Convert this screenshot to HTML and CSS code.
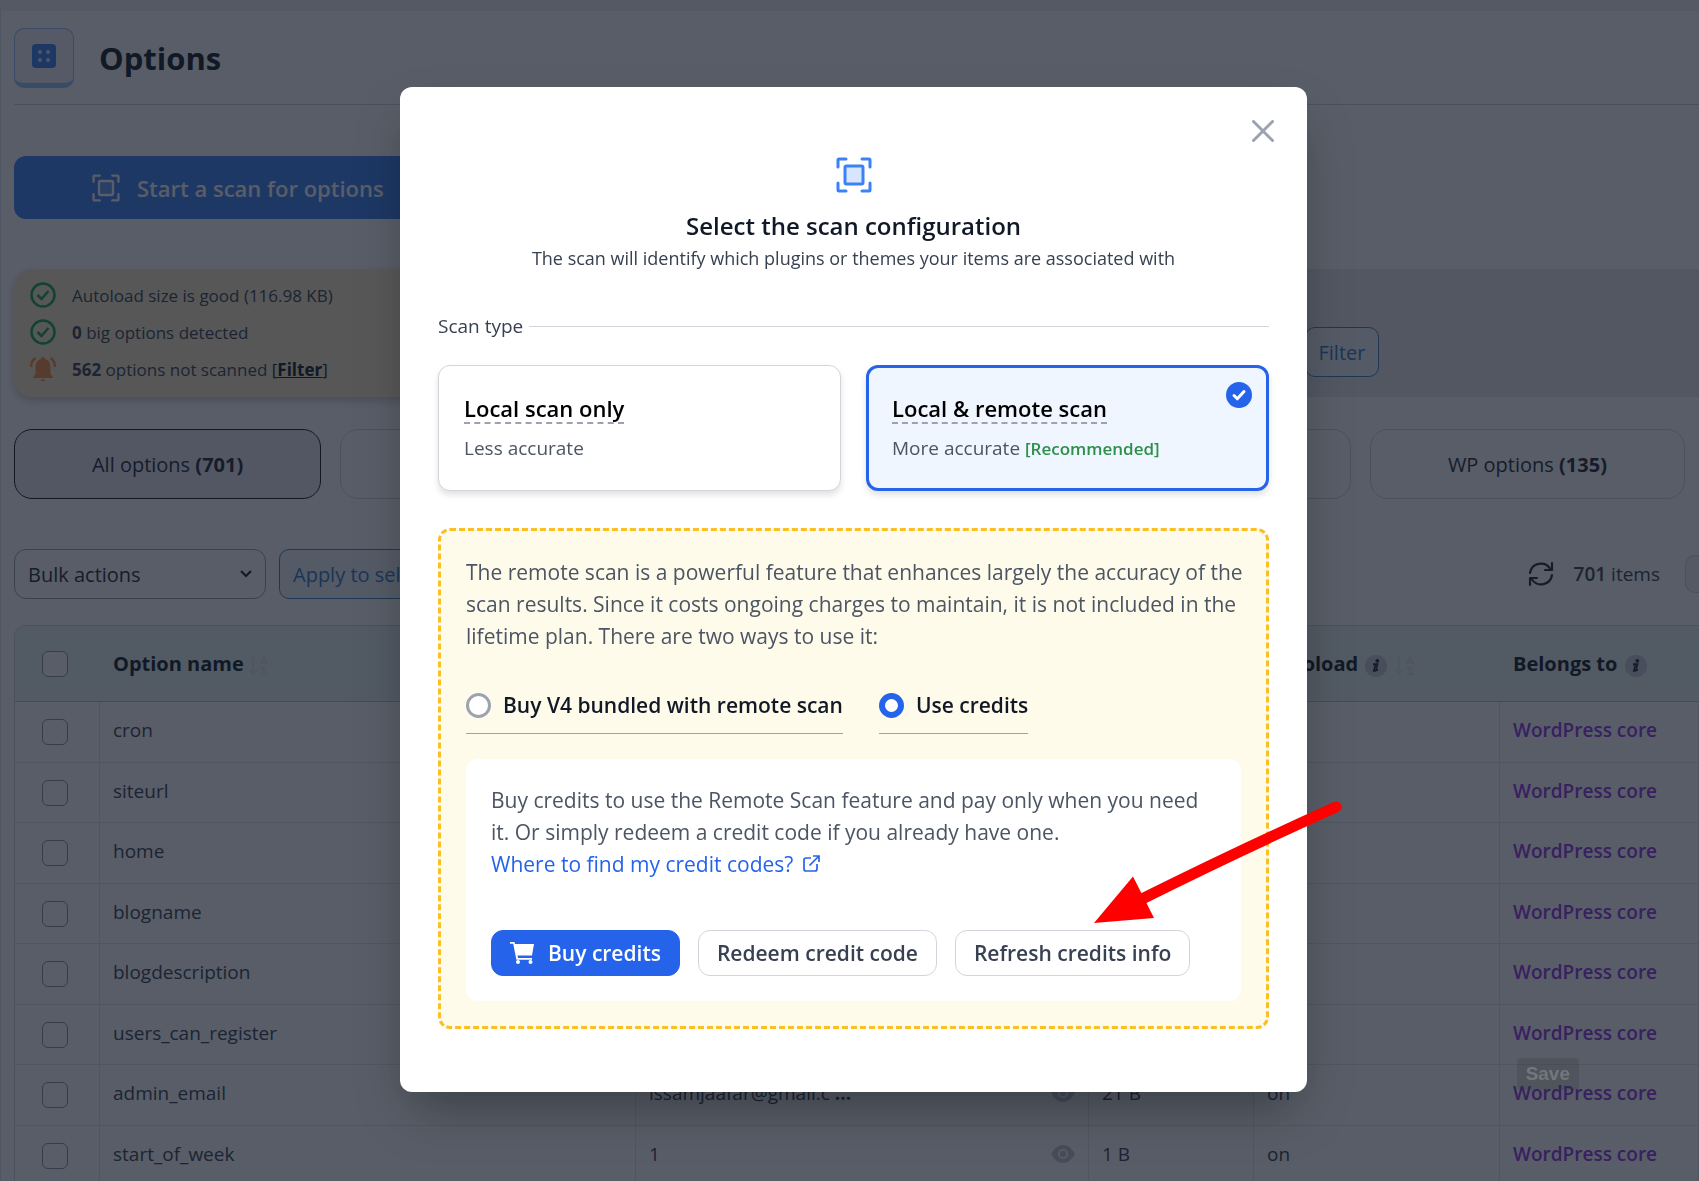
FILE: index.html
```html
<!DOCTYPE html>
<html lang="en">
<head>
<meta charset="utf-8">
<title>Options</title>
<link rel="stylesheet" href="styles.css">
</head>
<body>
<svg class="sprite" aria-hidden="true">
  <symbol id="scan" viewBox="0 0 36 36"><path d="M2 10V3Q2 2 3 2h7M26 2h7q1 0 1 1v7M34 26v7q0 1-1 1h-7M10 34H3q-1 0-1-1v-7" fill="none" stroke="currentColor" stroke-width="3" stroke-linecap="round"/><rect x="9" y="9" width="18" height="18" rx="1.500" fill="currentColor" fill-opacity=".2" stroke="currentColor" stroke-width="3"/></symbol>
  <symbol id="sort" viewBox="0 0 20 20"><path d="M4 1v16M1 14l3 4 3-4M12 18h6l-5.500-6H18M12 8l3-7 3 7M13 6h4" fill="none" stroke="currentColor" stroke-width="1.600"/></symbol>
  <symbol id="check" viewBox="0 0 26 26"><circle cx="13" cy="13" r="11.500" fill="none" stroke="currentColor" stroke-width="2.500"/><path d="M7.500 13l4 4 7-8" fill="none" stroke="currentColor" stroke-width="2.500"/></symbol>
  <symbol id="info" viewBox="0 0 22 22"><circle cx="11" cy="11" r="11" fill="#c9cbd8"/><circle cx="12.300" cy="5.800" r="1.900" fill="#1f2937"/><path d="M8 9.200h4.600l-1.700 6.200 2.100-.5M8.300 9.600h2.200l-1.700 6.300h2.600" fill="none" stroke="#1f2937" stroke-width="1.700"/></symbol>
  <symbol id="eye" viewBox="0 0 24 20"><path d="M0 10Q5 1 12 1t12 9q-5 9-12 9T0 10z" fill="currentColor"/><circle cx="12" cy="10" r="5" fill="#fff"/><circle cx="12" cy="10" r="3.200" fill="currentColor"/></symbol>
</svg>

<main class="page">
  <header class="page-head">
    <div class="badge">
      <svg width="24" height="24" viewBox="0 0 24 24"><rect width="24" height="24" rx="4" fill="#3b82f6"/><g fill="#dbeafe"><circle cx="8" cy="8" r="2"/><circle cx="16" cy="8" r="2"/><circle cx="8" cy="16" r="2"/><circle cx="16" cy="16" r="2"/></g></svg>
    </div>
    <h1>Options</h1>
  </header>

  <button class="start" type="button"><svg width="28" height="28"><use href="#scan"/></svg>Start a scan for options</button>

  <section class="summary">
    <ul class="status">
      <li><svg class="ok" width="26" height="26"><use href="#check"/></svg><span>Autoload size is good (116.98 KB)</span></li>
      <li><svg class="ok" width="26" height="26"><use href="#check"/></svg><span><b>0</b> big options detected</span></li>
      <li><svg width="26" height="26" viewBox="0 0 26 26"><path d="M13 1q2 0 2 2 5.500 1.500 5.500 8v7l3 4h-21l3-4v-7Q5.500 4.500 11 3q0-2 2-2zM10.500 23.500h5q-1 2-2.500 2t-2.500-2z" fill="#fb923c"/><path d="M1 11q0-6 4.500-9M25 11q0-6-4.500-9" fill="none" stroke="#fb923c" stroke-width="2.500"/></svg><span><b>562</b> options not scanned <a href="#filter">[<b>Filter</b>]</a></span></li>
    </ul>
    <div class="filters"><button class="outline" type="button">Filter</button></div>
  </section>

  <nav class="tabs">
    <button class="tab active" type="button">All options <b>(701)</b></button>
    <button class="tab" type="button"></button>
    <button class="tab" type="button"></button>
    <button class="tab" type="button"></button>
    <button class="tab" type="button">WP options <b>(135)</b></button>
  </nav>

  <div class="toolbar">
    <select class="bulk" aria-label="Bulk actions"><option>Bulk actions</option></select>
    <button class="outline" type="button">Apply to selected</button>
    <div class="count">
      <svg width="26" height="26" viewBox="0 0 26 26" fill="none" stroke="#1f2937" stroke-width="2.200" stroke-linecap="round" stroke-linejoin="round"><path d="M2 12A11 11 0 0 1 22 7.500M24 2v7h-7M24 14A11 11 0 0 1 4 18.500M2 24v-7h7"/></svg>
      <span><b>701</b> items</span>
    </div>
    <button class="pager" type="button" aria-label="First page"></button>
  </div>

  <div class="table-box">
    <table>
      <colgroup><col class="c-check"><col class="c-name"><col><col class="c-size"><col class="c-auto"><col class="c-owner"></colgroup>
      <thead>
        <tr><th><input type="checkbox" aria-label="Select all"></th><th>Option name <svg class="sort" width="20" height="20"><use href="#sort"/></svg></th><th></th><th></th><th>Autoload <svg class="info" width="22" height="22"><use href="#info"/></svg> <svg class="sort" width="20" height="20"><use href="#sort"/></svg></th><th>Belongs to <svg class="info" width="22" height="22"><use href="#info"/></svg></th></tr>
      </thead>
      <tbody>
        <tr><td><input type="checkbox" aria-label="cron"></td><td>cron</td><td></td><td></td><td></td><td class="owner">WordPress core</td></tr>
        <tr><td><input type="checkbox" aria-label="siteurl"></td><td>siteurl</td><td></td><td></td><td></td><td class="owner">WordPress core</td></tr>
        <tr><td><input type="checkbox" aria-label="home"></td><td>home</td><td></td><td></td><td></td><td class="owner">WordPress core</td></tr>
        <tr><td><input type="checkbox" aria-label="blogname"></td><td>blogname</td><td></td><td></td><td></td><td class="owner">WordPress core</td></tr>
        <tr><td><input type="checkbox" aria-label="blogdescription"></td><td>blogdescription</td><td></td><td></td><td></td><td class="owner">WordPress core</td></tr>
        <tr><td><input type="checkbox" aria-label="users_can_register"></td><td>users_can_register</td><td></td><td></td><td></td><td class="owner">WordPress core</td></tr>
        <tr><td><input type="checkbox" aria-label="admin_email"></td><td>admin_email</td><td><div class="value"><span>issamjaafar@gmail.c <b>...</b></span><svg class="eye" width="24" height="20"><use href="#eye"/></svg></div></td><td>21 B</td><td>on</td><td class="owner">WordPress core</td></tr>
        <tr><td><input type="checkbox" aria-label="start_of_week"></td><td>start_of_week</td><td><div class="value"><span>1</span><svg class="eye" width="24" height="20"><use href="#eye"/></svg></div></td><td>1 B</td><td>on</td><td class="owner">WordPress core</td></tr>
      </tbody>
    </table>
  </div>
</main>

<div class="overlay">
  <button class="save" type="button">Save</button>
  <div class="modal" role="dialog" aria-labelledby="dlg-title">
    <button class="close" type="button" aria-label="Close"><svg width="22" height="22" viewBox="0 0 22 22"><path d="M1.500 1.500l19 19M20.500 1.500l-19 19" stroke="#9ca3af" stroke-width="3" stroke-linecap="round"/></svg></button>
    <svg class="modal-icon" width="36" height="36"><use href="#scan"/></svg>
    <h2 id="dlg-title">Select the scan configuration</h2>
    <p class="lead">The scan will identify which plugins or themes your items are associated with</p>

    <div class="divider">Scan type</div>

    <div class="cards">
      <button class="card" type="button">
        <span class="card-title">Local scan only</span>
        <span class="card-sub">Less accurate</span>
      </button>
      <button class="card selected" type="button">
        <span class="card-title">Local &amp; remote scan</span>
        <span class="card-sub">More accurate <b>[Recommended]</b></span>
        <svg class="tick" width="26" height="26" viewBox="0 0 26 26"><circle cx="13" cy="13" r="13" fill="#2563eb"/><path d="M8 13.500l3.300 3.300L18 9.500" fill="none" stroke="#fff" stroke-width="3" stroke-linecap="round" stroke-linejoin="round"/></svg>
      </button>
    </div>

    <section class="remote">
      <p class="intro">The remote scan is a powerful feature that enhances largely the accuracy of the scan results. Since it costs ongoing charges to maintain, it is not included in the lifetime plan. There are two ways to use it:</p>
      <div class="choices">
        <label><input type="radio" name="way">Buy V4 bundled with remote scan</label>
        <label><input type="radio" name="way" checked>Use credits</label>
      </div>
      <div class="credits">
        <p>Buy credits to use the Remote Scan feature and pay only when you need it. Or simply redeem a credit code if you already have one.<br><a href="#codes">Where to find my credit codes? <svg width="17" height="17" viewBox="0 0 17 17" fill="none" stroke="currentColor" stroke-width="1.700"><path d="M8 3H3Q1 3 1 5v9q0 2 2 2h9q2 0 2-2V9M10 1h6v6M16 1L6.500 10.500"/></svg></a></p>
        <div class="actions">
          <button class="btn primary" type="button"><svg width="24" height="22" viewBox="0 0 24 22" fill="#fff"><path d="M0 0h4.500l.5 2h19l-2 11.500H7.500L8 16h14v1.700H6.400L3.200 1.700H0z"/><circle cx="8" cy="20" r="2"/><circle cx="20.500" cy="20" r="2"/></svg>Buy credits</button>
          <button class="btn" type="button">Redeem credit code</button>
          <button class="btn" type="button">Refresh credits info</button>
        </div>
      </div>
    </section>

    <svg class="arrow" width="248" height="126" viewBox="0 0 248 126"><path d="M242 6Q140 52 48 98" fill="none" stroke="#f00" stroke-width="11" stroke-linecap="round"/><path d="M0 122L39 75.500L60 117z" fill="#f00"/></svg>
  </div>
</div>
</body>
</html>
```
FILE: styles.css
```css
* { box-sizing: border-box; }

body {
  margin: 0;
  font-family: "Open Sans", "Noto Sans", sans-serif;
  font-size: 20px;
  color: #374151;
  background: #fff;
  height: 100vh;
  overflow: hidden;
}

button, input, select { font: inherit; color: inherit; margin: 0; }
b { font-weight: 700; }
.sprite { display: none; }

/* Page behind the dialog */
.page {
  border-top: 11px solid #f0f0f1;
  border-left: 1px solid #e5e7eb;
  padding: 17px 0 0 13px;
}

.page-head {
  display: flex;
  align-items: flex-start;
  gap: 25px;
  height: 77px;
  border-bottom: 1px solid #d1d5db;
}

.badge {
  display: flex;
  align-items: center;
  justify-content: center;
  width: 60px;
  height: 60px;
  background: #f3f6fb;
  border: 1px solid #93c5fd;
  border-bottom-width: 5px;
  border-radius: 10px;
}

h1 { margin: 0; font-size: 31px; line-height: 60px; font-weight: 700; color: #111827; }

.start {
  display: flex;
  align-items: center;
  gap: 17px;
  width: 448px;
  height: 63px;
  margin-top: 51px;
  padding: 0 78px;
  border: 0;
  border-radius: 12px;
  background: #3b82f6;
  color: #fff;
  font-size: 22px;
  font-weight: 600;
  white-space: nowrap;
}

.summary {
  display: grid;
  grid-template-columns: 1fr 1fr;
  height: 128px;
  margin-top: 50px;
}

.status {
  display: flex;
  flex-direction: column;
  gap: 11px;
  margin: 0;
  padding: 13px 16px;
  list-style: none;
  background: #fbecc8;
  border-radius: 18px;
  box-shadow: 0 4px 8px rgba(0, 0, 0, .2);
  font-size: 17px;
}
.status li { display: flex; align-items: center; gap: 16px; height: 26px; }
.status a { color: #111827; }
.ok { color: #16a34a; }

.filters {
  display: flex;
  align-items: center;
  padding: 38px 0 0 448px;
  background: #e9eaed;
}

.outline {
  height: 50px;
  padding: 0 13px;
  border: 1px solid #3b82c6;
  border-radius: 10px;
  background: #f0f8fa;
  color: #3578c8;
  font-size: 20px;
}

.tabs {
  display: grid;
  grid-template-columns: 307fr 324fr 324fr 324fr 315fr;
  gap: 19px;
  margin: 32px 14px 0 0;
}
.tab {
  height: 70px;
  border: 1px solid #d1d5db;
  border-radius: 18px;
  background: #fff;
  color: #1f2937;
}
.tab.active { border-color: #111827; background: #ebecf0; }

.toolbar { display: flex; align-items: center; gap: 13px; margin-top: 50px; }
.bulk {
  width: 252px;
  height: 50px;
  padding: 0 13px;
  border: 1px solid #9ca3af;
  border-radius: 12px;
  color: #1f2937;
  appearance: none;
  background: #fff url("data:image/svg+xml,%3Csvg xmlns='http://www.w3.org/2000/svg' width='14' height='10'%3E%3Cpath d='M2 2l5 5 5-5' fill='none' stroke='%23111827' stroke-width='2'/%3E%3C/svg%3E") no-repeat right 12px center;
}
.count { display: flex; align-items: center; gap: 20px; margin-left: auto; padding-right: 12px; font-size: 19px; }
.count b { font-weight: 600; }
.pager { width: 14px; height: 38px; border: 1px solid #d1d5db; border-right: 0; border-radius: 10px 0 0 10px; background: #f0f0f1; }

.table-box {
  margin-top: 26px;
  border: 1px solid #d1d5db;
  border-right: 0;
  border-radius: 12px 0 0 0;
  overflow: hidden;
}
table { width: 100%; table-layout: fixed; border-collapse: separate; border-spacing: 0; font-size: 19px; }
.c-check { width: 85px; }
.c-name { width: 536px; }
.c-size { width: 165px; }
.c-auto { width: 246px; }
.c-owner { width: 199px; }
th, td { padding: 0 0 4px 13px; text-align: left; white-space: nowrap; }
th { height: 76px; padding-bottom: 0; background: #eaf3f2; border-bottom: 1px solid #bfc6cf; color: #111827; font-size: 20px; font-weight: 700; }
td { height: 61px; border-bottom: 1px solid #e5e7eb; border-right: 1px solid #e5e7eb; }
tbody tr:nth-child(even) td { height: 60px; }
th:first-child, td:first-child { padding-left: 27px; }
th svg { vertical-align: middle; }
.sort { color: #e0e5e8; }
.info { margin: 0 2px; }
.eye { color: #c3c8d0; }

input[type="checkbox"] {
  display: block;
  appearance: none;
  width: 26px;
  height: 26px;
  border: 1px solid #8c929c;
  border-radius: 6px;
  background: #fff;
}
td input[type="checkbox"] { margin-top: 4px; }

.value { display: flex; align-items: center; justify-content: space-between; padding-right: 13px; }
.owner { color: #9333ea; font-weight: 600; }

/* Dialog */
.overlay {
  position: fixed;
  inset: 0;
  display: flex;
  align-items: flex-start;
  justify-content: center;
  padding: 87px 0 0 8px;
  background: rgba(17, 24, 39, .7);
}

.save {
  position: absolute;
  right: 120px;
  top: 1058px;
  height: 32px;
  padding: 0 9px;
  border: 0;
  border-radius: 4px;
  background: rgba(50, 50, 50, .2);
  color: rgba(255, 255, 255, .2);
  font: 700 19px "Liberation Sans", Arial, sans-serif;
}

.modal {
  position: relative;
  display: flex;
  flex-direction: column;
  width: 907px;
  padding: 70px 38px 63px;
  background: #fff;
  border-radius: 12px;
  box-shadow: 0 25px 50px -12px rgba(0, 0, 0, .35);
}

.close { position: absolute; top: 33px; right: 33px; padding: 0; border: 0; background: none; line-height: 0; }
.modal-icon { align-self: center; color: #3b82f6; }
h2 { margin: 17px 0 0; font-size: 24px; line-height: 32px; font-weight: 600; color: #111827; text-align: center; }
.lead { margin: 3px 0 0; font-size: 18px; line-height: 26px; text-align: center; }

.divider { display: flex; align-items: center; gap: 6px; margin-top: 41px; font-size: 19px; line-height: 28px; }
.divider::after { content: ""; flex: 1; border-top: 1px solid #d1d5db; }

.cards { display: grid; grid-template-columns: 1fr 1fr; gap: 25px; margin-top: 25px; }
.card {
  position: relative;
  display: flex;
  flex-direction: column;
  align-items: flex-start;
  justify-content: center;
  gap: 10px;
  height: 126px;
  padding: 0 25px;
  border: 1px solid #d1d5db;
  border-radius: 12px;
  background: #fff;
  box-shadow: 0 4px 6px rgba(0, 0, 0, .12);
}
.card.selected { padding: 0 23px; border: 3px solid #2563eb; background: #eff6ff; }
.card-title { font-size: 22px; line-height: 28px; font-weight: 600; color: #000; border-bottom: 2px dashed #9ca3af; }
.card-sub { font-size: 19px; line-height: 28px; color: #4b5563; }
.card-sub b { font-size: 17px; font-weight: 600; color: #2d8f4a; }
.tick { position: absolute; top: 14px; right: 14px; }

.remote {
  margin-top: 37px;
  padding: 25px;
  border: 3px dashed #fbbf24;
  border-radius: 12px;
  background: #fffbeb;
  color: #4b5563;
}
.remote p { margin: 0; font-size: 21px; line-height: 32px; }
.remote .intro { margin-right: -8px; }
.choices { display: flex; gap: 36px; margin-top: 37px; }
.choices label {
  display: flex;
  align-items: center;
  gap: 12px;
  padding-bottom: 12px;
  border-bottom: 1px solid #9ca3af;
  font-size: 21px;
  line-height: 32px;
  font-weight: 600;
  color: #111827;
}
input[type="radio"] {
  appearance: none;
  width: 25px;
  height: 25px;
  border: 3px solid #9ca3af;
  border-radius: 50%;
  background: #fff;
}
input[type="radio"]:checked { border: 6px solid #2563eb; }

.credits { margin-top: 25px; padding: 25px; border-radius: 12px; background: #fff; }
.credits a { color: #2563eb; text-decoration: none; }
.credits a svg { margin-left: 4px; }
.actions { display: flex; gap: 18px; margin-top: 50px; }
.btn {
  display: flex;
  align-items: center;
  gap: 14px;
  height: 46px;
  padding: 0 18px;
  border: 1px solid #d1d5db;
  border-radius: 12px;
  background: #fff;
  color: #374151;
  font-size: 21px;
  font-weight: 600;
  white-space: nowrap;
}
.btn.primary { border-color: #2563eb; background: #2563eb; color: #fff; }

.arrow { position: absolute; left: 694px; top: 714px; pointer-events: none; }
```
